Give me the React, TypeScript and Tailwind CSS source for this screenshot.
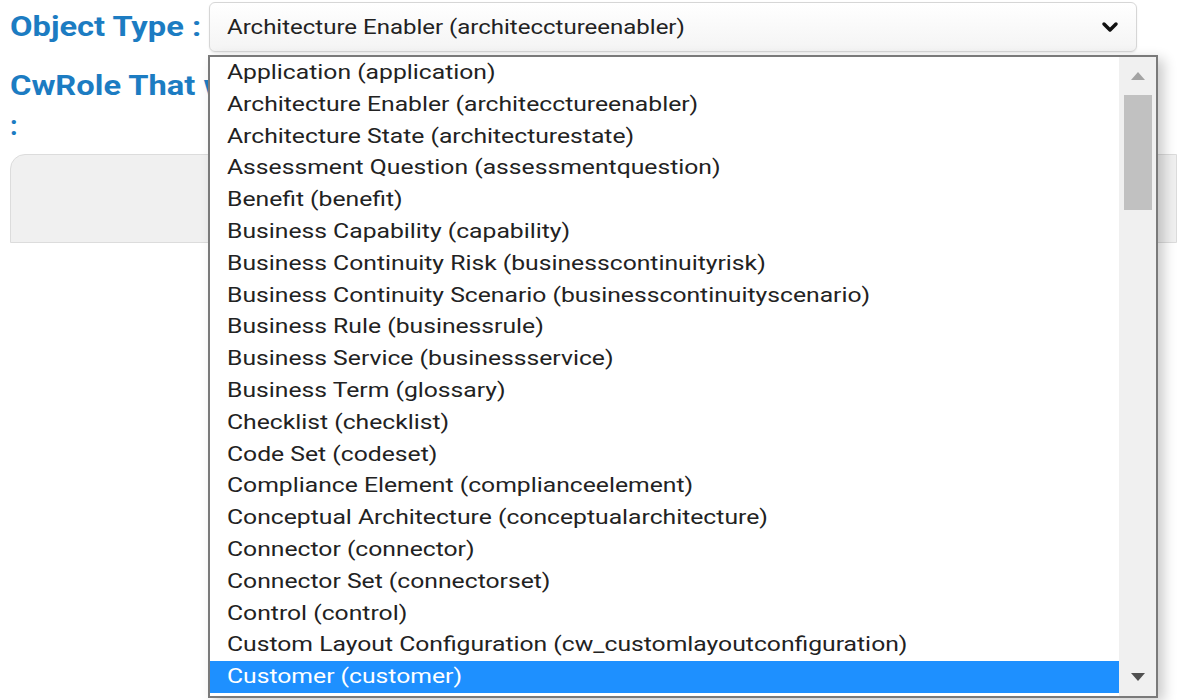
import { ChevronDown } from "lucide-react";

const options = [
  "Application (application)",
  "Architecture Enabler (architecctureenabler)",
  "Architecture State (architecturestate)",
  "Assessment Question (assessmentquestion)",
  "Benefit (benefit)",
  "Business Capability (capability)",
  "Business Continuity Risk (businesscontinuityrisk)",
  "Business Continuity Scenario (businesscontinuityscenario)",
  "Business Rule (businessrule)",
  "Business Service (businessservice)",
  "Business Term (glossary)",
  "Checklist (checklist)",
  "Code Set (codeset)",
  "Compliance Element (complianceelement)",
  "Conceptual Architecture (conceptualarchitecture)",
  "Connector (connector)",
  "Connector Set (connectorset)",
  "Control (control)",
  "Custom Layout Configuration (cw_customlayoutconfiguration)",
  "Customer (customer)",
];

// the page is rendered slightly stretched horizontally
const wide = "inline-block origin-left scale-x-[1.235] whitespace-nowrap";

export default function App() {
  return (
    <div className="relative w-[1177px] h-[700px] overflow-hidden bg-white font-['Roboto',sans-serif]">
      {/* Object type row */}
      <div className="flex items-center pl-[10px] pt-[2px]">
        <label className="w-[199px] text-[27px] font-bold text-[#1c7cc2] leading-none">
          <span className="inline-block origin-left scale-x-[1.21] whitespace-nowrap">Object Type :</span>
        </label>
        <div className="flex items-center justify-between w-[928px] h-[50px] pl-[17px] pr-[14px] rounded-[6px] border border-[#d6d6d6] bg-gradient-to-b from-white to-[#f4f4f4] shadow-[0_1px_2px_rgba(0,0,0,0.08)]">
          <span className="inline-block origin-left scale-x-[1.2] whitespace-nowrap text-[20px] text-[#222]">
            Architecture Enabler (architecctureenabler)
          </span>
          <ChevronDown className="w-[24px] h-[24px] text-[#111]" strokeWidth={3.5} />
        </div>
      </div>

      {/* Role row */}
      <div className="pl-[10px] pt-[14px] text-[27px] font-bold text-[#1c7cc2] leading-[40px]">
        <div className="w-[198px] overflow-hidden">
          <span className="inline-block origin-left scale-x-[1.21] whitespace-nowrap">CwRole That will be assigned</span>
        </div>
        <div>:</div>
      </div>

      {/* Panel */}
      <div className="ml-[10px] mt-[8px] h-[89px] rounded-tl-[15px] border border-[#dcdcdc] bg-[#f0f0f0]" />

      {/* Open dropdown */}
      <div className="absolute left-[208px] top-[55px] w-[950px] h-[643px] flex border-2 border-[#7a7a7a] bg-white shadow-[6px_4px_12px_rgba(0,0,0,0.2)]">
        <ul className="flex-1 overflow-hidden">
          {options.map((o, i) => (
            <li
              key={o}
              className={
                i === options.length - 1
                  ? "h-[31.8px] leading-[31.8px] pl-[17px] text-[20px] bg-[#1e90ff] text-white"
                  : "h-[31.8px] leading-[31.8px] pl-[17px] text-[20px] text-[#222]"
              }
            >
              <span className={wide}>{o}</span>
            </li>
          ))}
        </ul>
        <div className="w-[37px] bg-[#f0f0f0] flex flex-col items-center">
          <div className="h-[38px] flex items-center justify-center">
            <svg width="14" height="8" viewBox="0 0 14 8">
              <path d="M0 8 L7 0 L14 8 Z" fill="#a3a3a3" />
            </svg>
          </div>
          <div className="w-[28px] h-[115px] bg-[#c1c1c1]" />
          <div className="flex-1" />
          <div className="h-[38px] flex items-center justify-center">
            <svg width="14" height="8" viewBox="0 0 14 8">
              <path d="M0 0 L14 0 L7 8 Z" fill="#505050" />
            </svg>
          </div>
        </div>
      </div>
    </div>
  );
}
